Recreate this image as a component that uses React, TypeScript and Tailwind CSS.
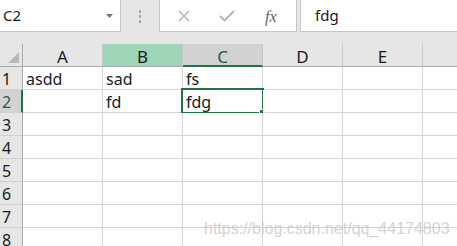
import { Fragment } from "react";

const cols = ["A", "B", "C", "D", "E"];
const data: Record<string, string> = {
    A1: "asdd",
    B1: "sad",
    C1: "fs",
    B2: "fd",
    C2: "fdg",
};

export default function App() {
    const rows = [1, 2, 3, 4, 5, 6, 7, 8];

    return (
        <div
            className="relative w-[457px] h-[246px] overflow-hidden bg-[#e6e6e6] text-[#1a1a1a]"
            style={{ fontFamily: '"Noto Sans", "Noto Sans CJK SC", sans-serif' }}
        >
            {/* Formula bar */}
            <div className="flex h-[44px] items-start">
                <div className="flex h-[32px] w-[121px] items-center justify-between border-r border-b border-[#c6c6c6] bg-white pl-[3px] pr-[7px]">
                    <span className="text-[15px] leading-none">C2</span>
                    <svg width="7" height="4" viewBox="0 0 7 4">
                        <path d="M0 0h7L3.5 4z" fill="#777" />
                    </svg>
                </div>
                <div className="flex w-[38px] flex-col items-center gap-[2px] pt-[10px]">
                    <div className="h-[3px] w-[2px] bg-[#a6a6a6]" />
                    <div className="h-[3px] w-[2px] bg-[#a6a6a6]" />
                    <div className="h-[3px] w-[2px] bg-[#a6a6a6]" />
                </div>
                <div className="relative h-[32px] w-[138px] border border-t-0 border-[#c6c6c6] bg-white">
                    <svg className="absolute left-[18px] top-[10px]" width="12" height="12" viewBox="0 0 12 12">
                        <path d="M1 1l10 10M11 1L1 11" stroke="#b3b3b3" strokeWidth="1.4" />
                    </svg>
                    <svg className="absolute left-[59px] top-[10px]" width="16" height="12" viewBox="0 0 16 12">
                        <path d="M1 6l4.5 4.5L15 1" stroke="#b3b3b3" strokeWidth="1.8" fill="none" />
                    </svg>
                    <span
                        className="absolute left-[105px] top-[5px] text-[16px] italic text-[#666]"
                        style={{ fontFamily: '"Liberation Serif", serif' }}
                    >
                        fx
                    </span>
                </div>
                <div className="ml-[3px] flex h-[32px] flex-1 items-center border-l border-b border-[#c6c6c6] bg-white pl-[14px]">
                    <span className="text-[15px] leading-none">fdg</span>
                </div>
            </div>

            {/* Sheet grid */}
            <div className="grid grid-cols-[23px_80px_80px_80px_80px_80px_1fr] grid-rows-[23px_repeat(8,23px)]">
                {/* Corner */}
                <div className="relative border-r border-b border-[#ababab] bg-[#e6e6e6]">
                    <svg className="absolute right-[3px] bottom-[3px]" width="11" height="11" viewBox="0 0 11 11">
                        <path d="M11 0v11H0z" fill="#b8b8b8" />
                    </svg>
                </div>
                {cols.map((c) => {
                    const isB = c === "B";
                    const isC = c === "C";
                    return (
                        <div
                            key={c}
                            className={`flex items-center justify-center border-r border-[#c6c6c6] text-[17px] leading-none ${
                                isB
                                    ? "bg-[#9fd5b7] border-b border-b-[#ababab]"
                                    : isC
                                    ? "bg-[#d2d2d2] border-b-2 border-b-[#217346] text-[#1e5c45]"
                                    : "bg-[#e6e6e6] border-b border-b-[#ababab]"
                            }`}
                        >
                            <span className="pt-[3px]">{c}</span>
                        </div>
                    );
                })}
                <div className="border-b border-[#ababab] bg-[#e6e6e6]" />

                {rows.map((r) => (
                    <Fragment key={r}>
                        <div
                            className={`flex items-end pl-[2px] pb-[2px] text-[16px] leading-none ${
                                r === 2
                                    ? "border-r-2 border-r-[#217346] bg-[#d2d2d2] text-[#1e5c45]"
                                    : "border-r border-r-[#ababab] bg-[#e6e6e6]"
                            } border-b border-b-[#d0d0d0]`}
                        >
                            {r}
                        </div>
                        {cols.map((c) => {
                            const key = `${c}${r}`;
                            const selected = key === "C2";
                            return (
                                <div
                                    key={key}
                                    className="relative flex items-end border-r border-b border-[#d4d4d4] bg-white pl-[3px] pb-[2px] text-[16px] leading-none"
                                >
                                    {data[key]}
                                    {selected && (
                                        <div className="absolute -left-[2px] -top-[2px] h-[26px] w-[83px] border-2 border-[#217346]">
                                            <div className="absolute -right-[4px] -bottom-[4px] h-[7px] w-[7px] border border-white bg-[#217346]" />
                                        </div>
                                    )}
                                </div>
                            );
                        })}
                        <div className="border-b border-[#d4d4d4] bg-white" />
                    </Fragment>
                ))}
            </div>

            {/* Watermark */}
            <div
                className="absolute left-[204px] top-[221px] text-[16px] leading-none text-[#c8c8c8]/80"
                style={{ fontFamily: '"Liberation Sans", sans-serif' }}
            >
                https://blog.csdn.net/qq_44174803
            </div>
        </div>
    );
}
